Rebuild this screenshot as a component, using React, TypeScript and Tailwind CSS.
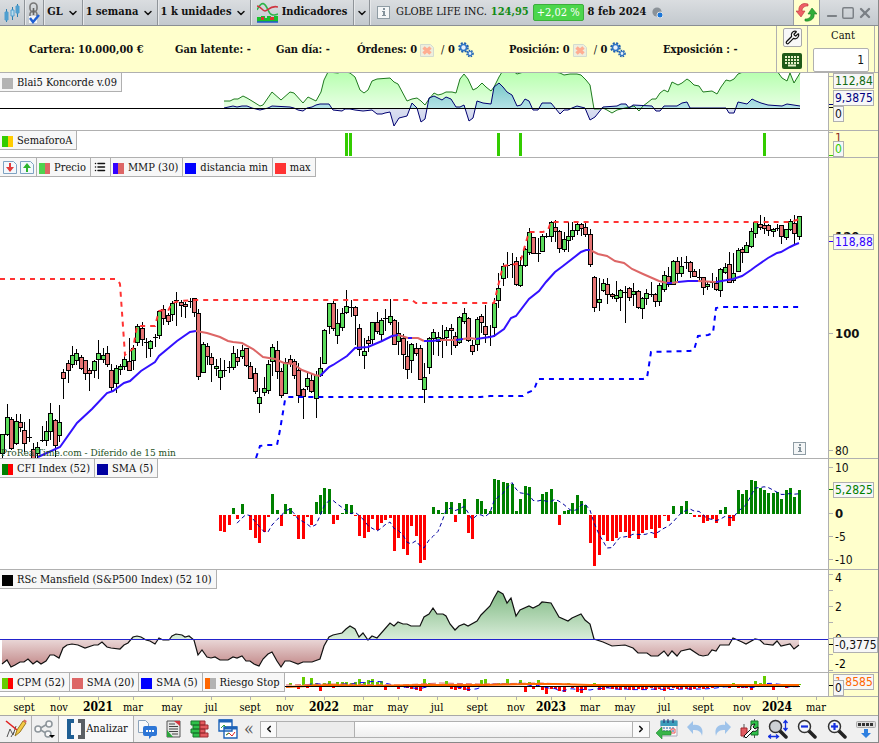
import type { ReactNode } from "react";
import { ChevronDown, ChevronLeft, ChevronRight, List, Minus, Square, Wrench, X } from "lucide-react";

const SERIF = "font-['DejaVu_Serif_Condensed','DejaVu_Serif',serif]";
const SANS = "font-['DejaVu_Sans_Condensed','DejaVu_Sans',sans-serif]";

// high, body top, body bottom, low, kind (1 up, 0 down, 2 doji)
const candles = [
  [434, 434, 453, 458, 1], [404, 417, 434, 436, 1], [417, 419, 448, 450, 0], [414, 421, 443, 445, 1],
  [414, 422, 427, 432, 0], [422, 430, 443, 452, 0], [419, 437, 437, 442, 2], [443, 449, 458, 458, 0],
  [442, 447, 453, 458, 1], [426, 440, 440, 442, 2], [421, 431, 440, 446, 1], [403, 413, 431, 440, 1],
  [419, 420, 445, 457, 0], [405, 422, 435, 442, 1], [369, 372, 378, 399, 0], [360, 363, 370, 383, 0],
  [346, 355, 364, 368, 1], [349, 353, 360, 365, 1], [355, 357, 368, 370, 0], [360, 360, 373, 380, 0],
  [368, 370, 373, 391, 0], [360, 361, 370, 378, 1], [340, 353, 359, 379, 1], [348, 355, 359, 363, 1],
  [346, 353, 364, 367, 0], [364, 370, 387, 391, 0], [365, 368, 383, 393, 1], [364, 366, 369, 375, 1],
  [355, 359, 366, 370, 1], [338, 361, 370, 371, 0], [345, 348, 360, 370, 1], [324, 326, 342, 346, 1],
  [322, 328, 339, 346, 0], [338, 342, 342, 358, 2], [340, 341, 348, 357, 1], [334, 337, 337, 347, 2],
  [310, 311, 335, 339, 1], [305, 309, 318, 325, 0], [313, 315, 321, 325, 0], [301, 303, 314, 321, 1],
  [292, 300, 300, 326, 2], [300, 302, 305, 317, 0], [302, 304, 306, 318, 0], [298, 301, 301, 308, 2],
  [298, 298, 312, 317, 0], [309, 313, 376, 380, 0], [342, 344, 372, 373, 1], [343, 346, 356, 365, 0],
  [353, 357, 364, 382, 0], [359, 366, 368, 376, 1], [358, 370, 377, 390, 1], [360, 370, 370, 377, 2],
  [361, 367, 367, 373, 2], [346, 353, 367, 370, 1], [349, 357, 361, 366, 0], [345, 350, 356, 359, 1],
  [348, 348, 365, 367, 0], [362, 366, 378, 379, 0], [368, 373, 391, 394, 0], [388, 397, 403, 413, 1],
  [377, 388, 392, 396, 1], [360, 364, 390, 394, 1], [344, 347, 361, 376, 1], [341, 350, 371, 379, 0],
  [368, 371, 395, 398, 0], [358, 362, 393, 394, 1], [355, 359, 363, 367, 0], [359, 361, 375, 379, 0],
  [363, 370, 395, 403, 0], [388, 389, 396, 419, 0], [372, 378, 386, 390, 1], [373, 380, 391, 393, 0],
  [371, 375, 398, 418, 1], [357, 368, 375, 377, 1], [329, 330, 363, 363, 1], [303, 303, 326, 334, 1],
  [301, 303, 328, 331, 0], [309, 323, 335, 344, 1], [308, 313, 327, 331, 1], [290, 306, 312, 314, 1],
  [300, 307, 307, 317, 2], [306, 307, 315, 345, 0], [324, 328, 349, 356, 0], [338, 351, 355, 369, 1],
  [336, 340, 343, 352, 0], [322, 322, 339, 344, 1], [312, 322, 331, 334, 0], [318, 320, 334, 342, 1],
  [309, 318, 318, 331, 2], [299, 316, 322, 325, 1], [319, 320, 344, 345, 0], [322, 333, 341, 355, 1],
  [334, 338, 354, 369, 0], [341, 356, 369, 379, 0], [343, 344, 360, 373, 1], [343, 348, 353, 356, 0],
  [345, 348, 379, 380, 0], [363, 377, 389, 403, 1], [337, 338, 367, 374, 1], [329, 332, 338, 355, 1],
  [332, 337, 341, 356, 1], [325, 338, 338, 358, 2], [327, 330, 337, 346, 1], [324, 328, 330, 355, 0],
  [332, 336, 345, 348, 0], [316, 317, 342, 344, 1], [308, 313, 321, 324, 1], [317, 318, 340, 342, 0],
  [340, 345, 351, 355, 0], [317, 319, 344, 351, 1], [314, 316, 322, 333, 0], [305, 326, 334, 343, 0],
  [325, 336, 336, 346, 2], [298, 303, 327, 337, 1], [273, 288, 300, 308, 1], [263, 266, 278, 286, 1],
  [252, 265, 265, 278, 2], [253, 264, 264, 278, 2], [257, 261, 284, 286, 0], [257, 265, 285, 287, 1],
  [248, 249, 265, 267, 1], [228, 232, 252, 255, 1], [237, 237, 253, 254, 0], [238, 253, 253, 262, 2],
  [234, 236, 251, 252, 1], [233, 236, 236, 238, 2], [221, 222, 236, 242, 1], [220, 227, 231, 242, 0],
  [230, 231, 248, 253, 0], [232, 239, 249, 252, 1], [222, 236, 240, 252, 1], [222, 230, 236, 240, 1],
  [223, 224, 230, 235, 1], [223, 224, 228, 236, 0], [223, 227, 234, 237, 0], [229, 234, 264, 267, 0],
  [276, 277, 307, 312, 0], [278, 299, 302, 311, 1], [279, 283, 290, 292, 1], [278, 284, 294, 304, 0],
  [293, 294, 296, 299, 0], [281, 295, 298, 302, 1], [289, 290, 297, 311, 1], [286, 292, 292, 323, 2],
  [287, 288, 297, 301, 0], [283, 291, 294, 306, 1], [290, 291, 307, 309, 0], [297, 298, 308, 319, 1],
  [289, 293, 298, 305, 1], [282, 294, 294, 297, 2], [293, 294, 301, 307, 0], [283, 285, 301, 306, 1],
  [271, 275, 289, 292, 1], [267, 276, 284, 287, 0], [260, 261, 284, 285, 1], [257, 261, 273, 281, 0],
  [257, 266, 273, 277, 1], [256, 262, 262, 269, 2], [261, 262, 271, 278, 0], [269, 271, 276, 277, 0],
  [269, 277, 277, 282, 2], [277, 277, 287, 295, 0], [281, 284, 286, 290, 1], [273, 282, 282, 288, 2],
  [277, 283, 289, 291, 0], [268, 269, 290, 297, 1], [263, 267, 272, 274, 1], [252, 264, 282, 283, 0],
  [253, 273, 280, 283, 1], [248, 250, 271, 272, 1], [247, 249, 252, 263, 0], [242, 245, 252, 253, 1],
  [228, 231, 246, 248, 1], [221, 222, 233, 238, 1], [215, 224, 227, 230, 0], [217, 225, 228, 234, 0],
  [224, 225, 230, 236, 0], [228, 229, 231, 237, 1], [224, 228, 228, 231, 2], [225, 225, 236, 244, 0],
  [229, 229, 237, 240, 1], [219, 221, 229, 231, 1], [215, 223, 233, 244, 0], [216, 216, 236, 240, 1],
];

const barX = (i: number) => Math.floor(2.95 + 4.351 * i);

const CFI_START = 50;
const cfi = [
  -16, -17, -10, 6, -4, 10, 0, -15, -23, -28, -17, -2, 20, 4, -11, 10, 6, -1, -24, -24, -2, -10, 12, 19, 26, 25,
  -9, -5, 1, 10, 9, -1, -21, -23, -17, -4, -15, -8, -5, -3, -36, -23, -34, -40, -11, -21, -48, -45, 0, 7, 4, 1,
  12, 12, -7, 11, 15, -18, -24, 15, 13, 5, 3, 35, 34, 32, 31, 30, 3, 15, 28, 27, 0, 0, 20, 22, 25, 12, -10, 3,
  4, 11, 19, 13, 9, -28, -51, -40, -20, -26, -26, -23, -17, -17, -23, -16, -24, -18, -15, -14, -23, -13, -1, -6,
  8, 0, 8, 13, 1, -2, -2, -8, -6, -4, -8, 4, 7, -11, -6, 24, 20, 24, 34, 33, 26, 24, 21, 21, 22, 15, 24, 26, 17, 24,
];
const cfiSma = cfi
  .map((_, i) => (i < 4 ? "" : `${barX(i + CFI_START)},${515 - cfi.slice(i - 4, i + 1).reduce((a, b) => a + b) / 5}`))
  .join(" ");

const CPM_START = 66;
const cpm = [
  2, 0, -3, 8, -2, 7, 2, -5, 2, 4, -2, 3, 3, 3, 2, 3, 6, 3, 5, 6, 3, 4, -4, 0, 0, -3, 0, -2, -3, -4, -5, 6, 2, 0,
  1, -1, 4, -3, -4, -3, -4, -5, -1, -1, 5, 6, 0, -1, 2, 2, 6, 2, 0, 5, -6, 3, -3, 5, -4, -8, -3, -3, -5, -6, 2,
  -2, -6, -7, -4, -1, 2, -4, -4, -2, -3, -3, -4, -3, -4, -4, -3, -4, -3, -2, -4, -3, -5, -3, -2, -3, -3, -3, -4,
  -3, -2, -3, -2, -2, -1, 1, 0, -2, 2, -2, -2, -2, -4, 4, 2, 9, 2, -4, 1, 0, -2, -1, -1, 1,
];
const cpmSma = cpm
  .map((_, i) => (i < 4 ? "" : `${barX(i + CPM_START)},${686 - cpm.slice(i - 4, i + 1).reduce((a, b) => a + b) / 5}`))
  .join(" ");

const koncordeGreen =
  "224,101 230,101 234,99 238,99 243,96 247,98 252,101 260,106 263,105 272,92 281,100 290,92 294,93 303,103 308,97 316,101 321,92 324,80 328,72 338,73 343,71 350,73 355,77 360,90 364,93 368,90 372,81 377,79 390,78 394,82 398,84 407,101 412,99 417,98 421,101 425,105 429,99 434,93 438,95 442,94 446,92 452,92 456,93 460,79 464,74 468,79 473,90 477,88 482,83 486,87 491,91 494,87 499,77 502,72 513,71 517,74 527,71 543,70 560,73 564,75 570,74 577,74 581,75 586,80 590,85 594,109 599,109 603,108 607,110 612,113 617,110 625,108 634,106 639,111 643,106 647,103 652,99 656,99 660,93 664,90 668,92 672,82 678,85 682,83 687,79 690,81 694,85 699,86 703,92 712,91 717,94 721,87 726,80 730,81 734,79 738,74 743,72 777,71 782,78 787,81 790,73 794,83 800,73";
const koncordeBlue =
  "224,108 233,106 237,107 242,106 247,106 252,108 260,110 268,108 272,106 290,107 294,108 298,110 303,111 307,108 312,107 316,105 320,104 329,104 333,110 342,111 345,109 350,109 355,110 363,111 372,110 377,114 382,114 385,113 390,112 394,126 399,118 407,116 412,103 417,108 421,122 425,119 429,98 434,96 442,100 446,97 451,99 456,107 460,107 464,105 469,121 473,118 477,101 483,103 491,104 494,87 499,83 503,87 507,92 512,95 517,106 521,105 525,99 529,101 533,110 538,110 542,103 551,103 560,114 564,110 568,110 572,108 577,106 585,108 590,120 595,117 599,112 603,107 617,106 621,104 626,104 629,108 633,105 652,106 656,111 660,111 664,106 677,106 682,103 687,102 690,108 703,108 726,108 729,113 734,113 738,102 747,104 752,99 756,101 761,103 768,105 782,106 787,104 800,106";

const mansfield =
  "2,664 7,660 11,667 15,665 20,662 24,662 28,659 33,664 37,661 41,664 46,661 50,655 54,655 59,658 63,648 67,645 72,644 78,645 85,648 94,645 98,645 102,642 107,647 111,648 120,649 124,645 128,643 133,637 137,636 141,637 146,640 150,641 155,644 159,638 163,640 169,640 172,636 176,634 182,635 185,637 189,636 194,640 198,655 202,650 207,657 211,658 215,657 220,660 228,660 233,657 237,658 242,656 246,661 250,661 254,664 259,666 263,659 268,654 272,652 277,661 281,667 285,661 290,661 298,664 303,662 312,662 320,659 324,646 329,637 333,635 342,633 346,629 350,626 355,629 359,637 363,633 368,640 372,636 377,638 390,623 394,626 398,622 403,624 407,624 411,626 420,626 424,617 429,614 433,608 437,614 443,614 446,616 450,624 455,630 459,626 464,624 468,626 477,621 481,615 490,606 494,598 498,591 503,594 507,603 511,598 516,616 520,610 529,606 533,608 539,605 542,602 551,603 555,610 559,617 568,621 572,618 581,614 585,620 590,624 594,639 603,642 612,646 625,645 633,648 638,653 647,653 651,656 658,656 664,651 668,656 672,651 677,656 681,651 690,649 699,655 703,656 708,655 712,650 716,651 720,645 729,645 733,638 742,642 746,644 755,639 760,640 764,644 773,645 777,641 781,646 790,644 794,649 799,645";

const mmpUp = [
  "38,457 60,447 77,423 92,409 107,393 113,391 124,383 130,381 141,371 155,362 159,356 177,341 190,332 196,331",
  "320,376 329,367 333,365 347,356 355,348 368,347 382,341 392,336 398,335",
  "408,338 412,338",
  "424,341 432,341 440,340",
  "448,340 452,340",
  "456,340 463,339",
  "476,339 490,337 494,336 504,329 511,318 516,316 529,299 539,291 546,282 555,272 563,266 581,252 586,250 590,250",
  "667,283 672,283",
  "678,282 688,281 698,281",
  "716,282 733,279 742,276 751,270 755,267 768,258 777,253 781,252 790,247 794,245 799,243",
];
const mmpDown = [
  "196,331 207,333 220,337 228,341 233,342 242,343 253,349 263,357 275,359 284,363 293,364 302,370 315,375 320,376",
  "398,335 408,338",
  "412,338 418,338 424,341",
  "440,340 456,340",
  "463,339 470,338 476,339",
  "590,250 598,254 607,256 615,261 624,263 632,269 643,274 659,281 667,283",
  "672,283 678,282",
  "698,281 716,282",
];

const months: [number, string][] = [
  [24, "sept"], [59, "nov"], [98, "2021"], [133, "mar"], [172, "may"], [211, "jul"], [250, "sept"], [285, "nov"],
  [324, "2022"], [363, "mar"], [398, "may"], [437, "jul"], [477, "sept"], [516, "nov"], [551, "2023"],
  [590, "mar"], [625, "may"], [664, "jul"], [703, "sept"], [742, "nov"], [777, "2024"], [816, "mar"],
];

function Panel({ top, height, box, legend, axis, children }: {
  top: number;
  height: string;
  box: number;
  legend?: ReactNode;
  axis: ReactNode;
  children: ReactNode;
}) {
  return (
    <section className={`flex ${height} border-b border-[#b0b0b0]`}>
      <div className="relative min-w-0 flex-1 bg-white">
        <svg className="block h-full w-full" viewBox={`0 ${top} 828 ${box}`} preserveAspectRatio="none">
          {children}
        </svg>
        {legend && <div className="absolute top-0 left-0 flex h-[19px] border-r border-b border-[#b0b0b0] bg-[#f7f7f7]">{legend}</div>}
      </div>
      <svg className={`block h-full w-[50px] shrink-0 border-l border-[#b0b0b0] bg-[#ffffcc] text-xs ${SANS}`} viewBox={`829 ${top} 49 ${box}`}>
        {axis}
      </svg>
    </section>
  );
}

function Legend({ colors, label }: { colors: string[]; label: string }) {
  return (
    <span className="flex items-center gap-1 border-l border-[#b0b0b0] pt-0.5 pr-1 pl-0.5 first:border-l-0">
      <span className="flex size-[11px] shrink-0">
        {colors.map((c) => (
          <i key={c} className={`flex-1 ${c}`} />
        ))}
      </span>
      <span className="text-[11px] leading-4 whitespace-nowrap">{label}</span>
    </span>
  );
}

function Tick({ y, label, bold, color = "#111" }: { y: number; label?: string; bold?: boolean; color?: string }) {
  return (
    <>
      <rect x="829" y={y} width="4" height="1" fill="#b0b0b0" />
      {label && (
        <text x="835" y={y + 5} fill={color} className={bold ? "text-[13px] font-bold" : ""}>{label}</text>
      )}
    </>
  );
}

function Tag({ y, w, label, color }: { y: number; w: number; label: string; color: string }) {
  return (
    <>
      <rect x="833.5" y={y + 0.5} width={w} height="15" fill="#f7f7f7" stroke="#b0b0b0" />
      <text x="835" y={y + 12} fill={color}>{label}</text>
    </>
  );
}

function Bars({ data, start, base, up, down }: { data: number[]; start: number; base: number; up: string; down: string }) {
  return (
    <g shapeRendering="crispEdges">
      {data.map((v, i) =>
        v === 0 ? null : (
          <rect key={i} x={barX(i + start) - 1} y={v > 0 ? base - 1 - v : base} width="3" height={Math.abs(v)} fill={v > 0 ? up : down} />
        ),
      )}
    </g>
  );
}

function Gears() {
  return (
    <svg className="h-4 w-4" viewBox="0 0 16 16" fill="none">
      <circle cx="5.5" cy="5.5" r="4.3" stroke="#1e5fae" strokeWidth="2" strokeDasharray="2 1.4" />
      <circle cx="5.5" cy="5.5" r="3" fill="#e8f1fa" stroke="#2f74c4" strokeWidth="1.6" />
      <circle cx="12" cy="11.5" r="3" stroke="#1e5fae" strokeWidth="1.6" strokeDasharray="1.5 1" />
      <circle cx="12" cy="11.5" r="2" fill="#e8f1fa" stroke="#2f74c4" strokeWidth="1.2" />
    </svg>
  );
}

function CancelOrder({ label }: { label: string }) {
  return (
    <button aria-label={label} className="flex">
      <svg className="h-[13px] w-[14px]" viewBox="0 0 14 13">
        <path d="M.5.5h10l3 3v9H.5z" fill="#eeeedd" stroke="#d3dcd0" />
        <path d="M3.5 3.5l7 6M10.5 3.5l-7 6" stroke="#ffae91" strokeWidth="3.5" />
      </svg>
    </button>
  );
}

function TitleBar() {
  const drop = "flex items-center gap-1 border-r border-[#8f9499] shadow-[1px_0_0_#e6e8ea]";
  return (
    <header className="flex h-[26px] border-b border-[#8a8f94] bg-linear-to-b from-[#dadde0] to-[#c3c9ce] text-[11px]">
      <button aria-label="Tipo de gráfico" className={`${drop} w-[25px] shrink-0 justify-center`}>
        <svg className="h-[18px] w-4" viewBox="0 0 16 18">
          <path d="M2.5 5v13M8.5 3v13M13.5 0v13" stroke="#2d7fae" />
          <path d="M1 8h3v8H1zM12 2h3v7h-3z" fill="#4e9fd0" stroke="#4e9fd0" />
          <path d="M7 6h3v6H7z" fill="#b9dcee" stroke="#4e9fd0" />
        </svg>
      </button>
      <button aria-label="Enlazar" className={`${drop} w-[19px] shrink-0 justify-center`}>
        <svg className="h-[22px] w-[14px]" viewBox="0 0 14 22" fill="none">
          <rect x="3" y="1" width="7" height="9" rx="3.4" stroke="#777" strokeWidth="1.6" />
          <rect x="3" y="9" width="7" height="9" rx="3.4" stroke="#777" strokeWidth="1.6" />
          <path d="M6.500 6v7" stroke="#666" strokeWidth="1.600" />
          <path d="M2 14h8v7H2z" fill="#f4f6f8" />
          <path d="M3 16l3 4 6-7" stroke="#1f5fd2" strokeWidth="2.4" />
        </svg>
      </button>
      <button className={`${drop} w-[39px] shrink-0 justify-center font-bold`}>GL <ChevronDown className="size-3" strokeWidth={3} /></button>
      <button className={`${drop} w-[75px] shrink-0 justify-center font-bold whitespace-nowrap`}>1 semana <ChevronDown className="size-3" strokeWidth={3} /></button>
      <button className={`${drop} w-[93px] shrink-0 justify-center font-bold whitespace-nowrap`}>1 k unidades <ChevronDown className="size-3" strokeWidth={3} /></button>
      <button className={`${drop} w-[103px] shrink-0 justify-center font-bold`}>
        <svg className="h-[21px] w-[21px] shrink-0" viewBox="0 0 21 21" fill="none">
          <path d="M0 8C5-2 8 1 11 8s6 5 10 4" stroke="#2eb34a" strokeWidth="1.6" />
          <path d="M0 4c4 0 5 5 8 5s5-6 13-4" stroke="#cf3440" strokeWidth="1.6" />
          <path d="M0 15h4v-1h4v2h2v-2h4v1h3v-1h4v6H0z" fill="#17c02b" />
          <path d="M4 15h3v3H4zM13 15h4v3h-4z" fill="#d33" />
          <path d="M0 20h21" stroke="#2256d2" strokeWidth="1.5" />
        </svg>
        Indicadores
      </button>
      <button aria-label="Lista de indicadores" className={`${drop} w-4 shrink-0 justify-center`}><ChevronDown className="size-3" strokeWidth={3} /></button>
      <div className="flex min-w-0 flex-1 items-center gap-1 pl-[7px] whitespace-nowrap">
        <InfoIcon />
        <span className="pl-0.5">GLOBE LIFE INC.</span>
        <b className="text-[#138a13]">124,95</b>
        <span className="rounded-xs border border-[#3cae3c] bg-[#4cd64c] px-[3px] leading-[15px] text-white">+2,02 %</span>
        <b>8 feb 2024</b>
        <svg className="ml-0.5 h-[11px] w-[11px]" viewBox="0 0 11 11">
          <circle cx="5" cy="5" r="4.6" fill="#8b9298" />
          <circle cx="8" cy="8" r="3" fill="#1b76d8" stroke="#dfe3e6" />
        </svg>
      </div>
      <button aria-label="Actualizar" className="flex w-[27px] shrink-0 items-center justify-center border-x border-[#9a9fa3] bg-[#ffffcc]">
        <svg className="h-[19px] w-[21px]" viewBox="0 0 21 19">
          <path d="M12 1C6-1 2 3 3 8H0l5 6 4-6H6c0-3 2-5 6-5z" fill="#ee6065" stroke="#b93238" strokeWidth=".6" />
          <path d="M9 18c6 1 10-3 9-7h3l-5-6-4 6h3c0 3-2 5-6 5z" fill="#2fae38" stroke="#1b7a24" strokeWidth=".6" />
        </svg>
      </button>
      <div className="flex w-[58px] shrink-0 items-center justify-around px-1 text-[#7b8085]">
        <button aria-label="Minimizar"><Minus className="mt-1.5 size-3.5" strokeWidth={3.5} /></button>
        <button aria-label="Maximizar"><Square className="size-3.5" strokeWidth={2.5} /></button>
        <button aria-label="Cerrar"><X className="size-4" strokeWidth={3.5} /></button>
      </div>
    </header>
  );
}

function InfoIcon() {
  return (
    <svg className="shrink-0" width="13" height="13" viewBox="0 0 13 13">
      <rect x=".5" y=".5" width="12" height="12" fill="#f4f6f7" stroke="#8f9ca4" />
      <path d="M6 2h2v2H6zM5 5h3v4h1v1H5V9h1V6H5z" fill="#84929b" />
    </svg>
  );
}

function Account() {
  return (
    <div className="flex h-[47px] border-b border-[#b0b0b0] text-[11px]">
      <div className="flex min-w-0 flex-1 items-center pt-0.5 pl-[29px] font-bold whitespace-nowrap">
        <span className="w-[146px]">Cartera: 10.000,00 €</span>
        <span className="w-[101px]">Gan latente: -</span>
        <span className="w-[81px]">Gan día: -</span>
        <span className="flex w-[152px] items-center gap-[3px]">
          Órdenes: 0 <CancelOrder label="Cancelar órdenes" /> <span className="ml-1"><span className="font-normal">/</span> 0</span> <Gears />
        </span>
        <span className="flex w-[154px] items-center gap-[3px]">
          Posición: 0 <CancelOrder label="Cerrar posición" /> <span className="ml-1"><span className="font-normal">/</span> 0</span> <Gears />
        </span>
        <span>Exposición : -</span>
      </div>
      <div className="flex w-8 shrink-0 flex-col items-center gap-1.5 border-x border-[#b0b0b0] pt-0.5">
        <button aria-label="Ajustes" className="flex size-[19px] items-center justify-center rounded-xs border border-[#a8a8a8] bg-[#f8f8f8]">
          <Wrench className="size-[15px]" strokeWidth={2} />
        </button>
        <button aria-label="Teclado">
          <svg className="block h-4 w-5" viewBox="0 0 20 16">
            <rect width="20" height="16" rx="2" fill="#1f5a18" />
            <path d="M3 4h14M3 7h14M3 10h14" stroke="#e6f0c8" strokeWidth="2" strokeDasharray="2 1" />
            <path d="M6 12.500h8" stroke="#e6f0c8" strokeWidth="2" />
          </svg>
        </button>
      </div>
      <label className="flex w-[67px] shrink-0 flex-col items-center gap-1 border-r border-[#b0b0b0] pt-0.5">
        <span className="pl-1 leading-4">Cant</span>
        <input defaultValue="1" className={`h-6 w-14 rounded-xs border border-[#b0b0b0] bg-white px-1 text-right text-xs ${SANS}`} />
      </label>
      <div className="w-[3px] shrink-0" />
    </div>
  );
}

function BottomBar() {
  const btn = "flex shrink-0 items-center justify-center";
  return (
    <footer className="flex h-7 items-center border-y border-t-[#a8a8a8] border-b-[#888] bg-[#f0f0f0] text-[11px]">
      <button aria-label="Dibujar" className={`${btn} h-full w-8 border-r border-[#b0b0b0]`}>
        <svg className="h-5 w-[22px]" viewBox="0 0 22 20" fill="none">
          <path d="M2 18l3-8 3 6 3-9M6 18l3-5" stroke="#555" />
          <path d="M1 2l11 9" stroke="#e02020" strokeWidth="1.600" />
          <path d="M10 17l2-6 6-9 3 2-6 9z" fill="#f4c945" stroke="#9c7a22" />
          <path d="M18 2l3 2 .8-2-2.300-1.600z" fill="#e06a60" />
        </svg>
      </button>
      <button aria-label="Compartir" className={`${btn} h-full w-[26px]`}>
        <svg className="h-[19px] w-[22px]" viewBox="0 0 22 19" fill="#f8f8f8" stroke="#8d959b" strokeWidth="1.500">
          <path d="M5 9l10-6M5 9l10 6" />
          <circle cx="4" cy="9" r="3" /><circle cx="15" cy="4" r="3" /><circle cx="14" cy="14" r="3" />
          <path d="M15 15h6l-3 3z" fill="#000" stroke="none" />
        </svg>
      </button>
      <button className={`${btn} h-full w-[76px] justify-between border-x border-[#b0b0b0] bg-[#f9f9f9] px-1 pr-0.5`}>
        <svg className="h-5 w-5" viewBox="0 0 20 20" fill="none" strokeWidth="4">
          <path d="M8 2H3v16h5" stroke="#205f94" />
          <path d="M12 2h5v16h-5" stroke="#5b5f63" />
        </svg>
        Analizar
      </button>
      <div className="flex w-[104px] shrink-0 items-center justify-between pl-1">
        <button aria-label="Notas">
          <svg className="block h-[19px] w-[19px]" viewBox="0 0 19 19">
            <path d="M.5.5h7l3 3v9H.5z" fill="#fafafa" stroke="#8ba3bb" />
            <path d="M7 6h10q2 0 2 2v6q0 2-2 2h-3l-3 3v-3H7q-2 0-2-2V8q0-2 2-2z" fill="#2e76d6" />
            <path d="M8 11h8" stroke="#fff" strokeWidth="2" strokeDasharray="2 1" />
          </svg>
        </button>
        <button aria-label="Informe">
          <svg className="block h-[18px] w-[15px]" viewBox="0 0 15 18">
            <path d="M1 1h13v16H1z" fill="#e6e6e6" stroke="#555" />
            <path d="M3 4h6M3 6.500h9M3 9h9M3 11.500h9M6 14h6" stroke="#444" />
            <path d="M8 1h6v5z" fill="#d3343e" /><path d="M1 10l6 7H1z" fill="#2ca43c" />
          </svg>
        </button>
        <button aria-label="Libro de órdenes">
          <svg className="block h-[18px] w-[19px]" viewBox="0 0 19 18">
            <path d="M1 1h9v4H1zM3 5h7v4H3zM1 9h9v4H1zM3 13h7v4H3z" fill="#2fc04a" stroke="#16772a" />
            <path d="M10 1h5v4h-5zM10 5h8v4h-8zM10 9h5v4h-5zM10 13h8v4h-8z" fill="#e35a5f" stroke="#9c2a30" />
          </svg>
        </button>
        <button aria-label="Ventanas">
          <svg className="block h-5 w-5" viewBox="0 0 20 20" fill="none">
            <path d="M1 1h13v11H1zM6 8h13v11H6z" fill="#fff" stroke="#1c63b8" strokeWidth="1.400" />
            <path d="M1 2h13M6 9h13" stroke="#1c63b8" strokeWidth="3" />
            <path d="M3 9l3-3 2 2" stroke="#2ca43c" />
            <path d="M8 16l3-2 3 3 3-4" stroke="#d22" /><path d="M8 16l3-2" stroke="#2ca43c" />
          </svg>
        </button>
      </div>
      <button aria-label="Contraer" className={`${btn} w-[22px] text-lg leading-4 text-[#555]`}>«</button>
      <div className="flex h-[17px] min-w-0 flex-1 border border-[#b0b0b0] bg-[#eee]">
        <button aria-label="Anterior" className={`${btn} w-4 border-r border-[#b0b0b0] bg-[#fafafa]`}><ChevronLeft className="size-2.5" strokeWidth={4} /></button>
        <div className="flex-[78] bg-[#ececec]" />
        <div className="flex-[279] border-x border-[#b0b0b0] bg-linear-to-b from-white to-[#efefef]" />
        <button aria-label="Siguiente" className={`${btn} w-4 bg-[#fafafa]`}><ChevronRight className="size-2.5" strokeWidth={4} /></button>
      </div>
      <div className="flex w-[228px] shrink-0 items-center justify-between pr-[2px] pl-[6px]">
        <button aria-label="Ir a fecha">
          <svg className="block h-5 w-[22px]" viewBox="0 0 22 20">
            <path d="M5 2h16v15H5z" fill="#f7f7f7" stroke="#aab" /><path d="M4.500 1.500h17V7h-17z" fill="#3b9dbb" />
            <path d="M8 0v4M12 0v4M17 0v4" stroke="#226" />
            <path d="M7 9h12M7 12h12" stroke="#8ac" strokeWidth="2" strokeDasharray="2 1" />
            <path d="M15 10h4v4h-4z" fill="none" stroke="#e55" />
            <path d="M0 14l6-6v4h9v4H6v4z" fill="#39b54a" stroke="#20862f" strokeWidth=".6" />
          </svg>
        </button>
        <button aria-label="Deshacer">
          <svg className="block h-4 w-[17px]" viewBox="0 0 17 16"><path d="M0 6l6-6v4c7-1 11 3 9 11-1-5-4-6-9-6v4z" fill="#9fc3ea" /></svg>
        </button>
        <button aria-label="Rehacer">
          <svg className="block h-4 w-[17px]" viewBox="0 0 17 16"><path d="M17 6l-6-6v4C4 3 0 7 2 15c1-5 4-6 9-6v4z" fill="#9fc3ea" /></svg>
        </button>
        <button aria-label="Configurar gráfico">
          <svg className="block h-5 w-[19px]" viewBox="0 0 19 20">
            <path d="M4 5v14M14.500 0v19" stroke="#555" />
            <path d="M1 9h6v8H1z" fill="#e25a60" stroke="#a3292f" /><path d="M11 2h7v14h-7z" fill="#30c24b" stroke="#16772a" />
            <path d="M4 17l7-7c-1-3 1-5 4-5l-2 3 2 2 3-2c0 4-3 5-5 4l-7 7z" fill="#fff" stroke="#111" />
          </svg>
        </button>
        <Magnifier label="Ajustar zoom" kind="fit" />
        <Magnifier label="Reducir" kind="out" />
        <Magnifier label="Ampliar" kind="in" />
        <button aria-label="Ocultar barra">
          <svg className="block h-[18px] w-5" viewBox="0 0 20 18">
            <rect x=".5" y="1.500" width="19" height="6" rx="1" fill="#ddd" stroke="#aaa" />
            <path d="M2 4.500h16" stroke="#333" strokeWidth="3" strokeDasharray="3 1" />
            <path d="M8 9h4v4h3l-5 5-5-5h3z" fill="#2f80e0" />
          </svg>
        </button>
      </div>
    </footer>
  );
}

function Magnifier({ label, kind }: { label: string; kind: "fit" | "out" | "in" }) {
  return (
    <button aria-label={label}>
      <svg className="block h-5 w-5" viewBox="0 0 20 20" fill="none">
        <path d="M12 12l6 6" stroke="#222" strokeWidth="3.500" strokeLinecap="round" />
        <circle cx="7.500" cy="7.500" r="6" fill={kind === "fit" ? "#ccd0d4" : "#f4f6fa"} stroke="#333" strokeWidth="1.500" />
        {kind !== "fit" && <path d="M4 7.500h7" stroke="#1430e0" strokeWidth="2.200" />}
        {kind === "in" && <path d="M7.500 4v7" stroke="#1430e0" strokeWidth="2.200" />}
        {kind === "fit" && (
          <path d="M17.500 2v9M15.500 4l2-2.500 2 2.500M15.500 9l2 2.500 2-2.500M1 17.500h9M3 15.500l-2.500 2 2.500 2M8 15.500l2.500 2-2.500 2" stroke="#1430e0" strokeWidth="1.300" />
        )}
      </svg>
    </button>
  );
}

export default function App() {
  return (
    <div className={`flex min-w-0 flex-col overflow-hidden border-r border-[#888] bg-[#ffffcc] text-[#111] ${SERIF}`}>
      <TitleBar />
      <Account />
      <main>
        <Panel
          top={73}
          box={57}
          height="h-[58px]"
          legend={<Legend colors={["bg-[#b3b3b3]"]} label="Blai5 Koncorde v.09" />}
          axis={
            <>
              <Tick y={76} />
              <rect x="829" y="104" width="5" height="1" fill="#000080" />
              <rect x="829" y="107" width="5" height="1" />
              <Tag y={73} w={40} label="112,84" color="#136b13" />
              <Tag y={90} w={40} label="9,3875" color="#000080" />
              <Tag y={106} w={10} label="0" color="#111" />
            </>
          }
        >
          <defs>
            <linearGradient id="kg" x1="0" y1="73" x2="0" y2="108" gradientUnits="userSpaceOnUse">
              <stop stopColor="#b8ffb0" />
              <stop offset="1" stopColor="#e8ffe4" />
            </linearGradient>
            <linearGradient id="kb" x1="0" y1="83" x2="0" y2="126" gradientUnits="userSpaceOnUse">
              <stop stopColor="#78c8c8" />
              <stop offset=".58" stopColor="#b4e2e6" />
              <stop offset=".58" stopColor="#dde1f2" />
              <stop offset="1" stopColor="#c8d0ea" />
            </linearGradient>
          </defs>
          <path d={`M224,108 L${koncordeGreen} L800,108z`} fill="url(#kg)" />
          <path d={`M224,108 L${koncordeBlue} L800,108z`} fill="url(#kb)" />
          <polyline points={koncordeGreen} fill="none" stroke="#1f7a1f" />
          <polyline points={koncordeBlue} fill="none" stroke="#000070" />
          <rect y="108" width="800" height="1" />
        </Panel>

        <Panel
          top={131}
          box={26}
          height="h-[27px]"
          legend={<Legend colors={["bg-[#33cc00]", "bg-[#ffcc00]"]} label="SemaforoA" />}
          axis={
            <>
              <Tick y={132} />
              <text x="835" y="142" fill="#8b2a1a">1</text>
              <rect x="829" y="155" width="4" height="1" fill="#33cc00" />
              <Tag y={141} w={10} label="0" color="#33cc00" />
            </>
          }
        >
          {[345, 349, 497, 519, 763].map((x) => (
            <rect key={x} x={x} y="133" width="3" height="23" fill="#33cc00" />
          ))}
        </Panel>

        <Panel
          top={158}
          box={300}
          height="h-[301px]"
          legend={
            <>
              <span className="flex w-9 items-center justify-center gap-[3px]">
                <button aria-label="Vender"><ArrowBox down /></button>
                <button aria-label="Comprar"><ArrowBox /></button>
              </span>
              <Legend colors={["bg-[#4fd24f]", "bg-[#dd6666]"]} label="Precio" />
              <button aria-label="Lista" className="flex w-5 items-center justify-center border-l border-[#b0b0b0]"><List className="size-3" strokeWidth={3} /></button>
              <Legend colors={["bg-[#3300ff]", "bg-[#dd6666]"]} label="MMP (30)" />
              <Legend colors={["bg-[#0000ff]"]} label="distancia min" />
              <Legend colors={["bg-[#ff3333]"]} label="max" />
            </>
          }
          axis={
            <>
              <Tick y={236} label="120" bold />
              <Tick y={333} label="100" bold />
              <Tick y={450} label="80" />
              <rect x="829" y="241" width="4" height="1" fill="#3300ff" />
              <Tag y={234} w={40} label="118,88" color="#3300ff" />
            </>
          }
        >
          <g shapeRendering="crispEdges">
            {candles.map(([h, t, b, l, kind], i) => {
              const x = barX(i);
              return (
                <g key={i}>
                  <rect x={x} y={h} width="1" height={Math.max(1, l - h)} fill="#000" />
                  {kind === 2 ? (
                    <rect x={x - 2} y={t} width="5" height="1" fill="#000" />
                  ) : (
                    <rect x={x - 1.5} y={t + 0.5} width="4" height={b - t} fill={kind === 1 ? "#5bdc5b" : "#e57373"} stroke="#000" />
                  )}
                </g>
              );
            })}
          </g>
          <g fill="none" strokeWidth="2">
            {mmpUp.map((p) => <polyline key={p} points={p} stroke="#3311ff" />)}
            {mmpDown.map((p) => <polyline key={p} points={p} stroke="#dd6666" />)}
            <polyline
              points="0,279 115,279 119,282 120,284 125,355 128,352 133,349 137,326 155,326 159,311 163,310 168,311 172,303 180,301 194,300 412,300 416,303 494,303 503,266 516,264 520,263 529,232 543,232 548,230 551,222 790,222 800,219"
              stroke="#ff3333"
              strokeDasharray="5 5"
            />
            <polyline
              points="256,458 260,446 266,445 277,445 280,430 285,400 288,397 480,397 490,396 523,396 527,393 534,390 538,379 643,379 647,378 651,352 690,351 694,350 698,336 708,335 713,333 716,308 722,307 799,307"
              stroke="#0000ff"
              strokeDasharray="5 5"
            />
          </g>
          <text x="1" y="456" className="text-[10px]" fill="#245024">ProRealTime.com - Diferido de 15 min</text>
          <g transform="translate(793 442)"><InfoIcon /></g>
        </Panel>

        <Panel
          top={459}
          box={110}
          height="h-[111px]"
          legend={
            <>
              <Legend colors={["bg-[#008000]", "bg-[#ff0000]"]} label="CFI Index (52)" />
              <Legend colors={["bg-[#0000a0]"]} label="SMA (5)" />
            </>
          }
          axis={
            <>
              <Tick y={467} label="10" />
              <Tick y={513} label="0" bold />
              <Tick y={536} label="-5" />
              <Tick y={559} label="-10" />
              <rect x="829" y="489" width="4" height="1" fill="#008000" />
              <Tag y={482} w={40} label="5,2825" color="#008000" />
            </>
          }
        >
          <Bars data={cfi} start={CFI_START} base={515} up="#008000" down="#ff0000" />
          <polyline points={cfiSma} fill="none" stroke="#0000a0" strokeDasharray="4 3" />
        </Panel>

        <Panel
          top={570}
          box={102}
          height="h-[103px]"
          legend={<Legend colors={["bg-black"]} label="RSc Mansfield (S&P500 Index) (52 10)" />}
          axis={
            <>
              <Tick y={574} />
              <text x="835" y="582">4</text>
              <Tick y={590} />
              <Tick y={606} label="2" />
              <Tick y={622} />
              <Tick y={638} label="0" />
              <Tick y={654} />
              <Tick y={670} />
              <text x="835" y="668">-2</text>
              <rect x="829" y="644" width="4" height="1" />
              <Tag y={637} w={44} label="-0,3775" color="#111" />
            </>
          }
        >
          <defs>
            <linearGradient id="rs" x1="0" y1="590" x2="0" y2="669" gradientUnits="userSpaceOnUse">
              <stop stopColor="#7db880" />
              <stop offset=".62" stopColor="#d8ecd9" />
              <stop offset=".62" stopColor="#ead8d8" />
              <stop offset="1" stopColor="#bf8282" />
            </linearGradient>
          </defs>
          <path d={`M2,639 L${mansfield} L799,639z`} fill="url(#rs)" />
          <polyline points={mansfield} fill="none" stroke="#111" strokeWidth="1.2" />
          <rect y="639" width="828" height="1" fill="#2222cc" />
        </Panel>

        <Panel
          top={673}
          box={23}
          height="h-[24px]"
          legend={
            <>
              <Legend colors={["bg-[#66cc00]", "bg-[#ff0000]"]} label="CPM (52)" />
              <Legend colors={["bg-[#dd6666]"]} label="SMA (20)" />
              <Legend colors={["bg-[#0000ff]"]} label="SMA (5)" />
              <Legend colors={["bg-[#ff6600]", "bg-[#b3b3b3]"]} label="Riesgo Stop" />
            </>
          }
          axis={
            <>
              <rect x="829" y="685" width="4" height="1" />
              <Tag y={674} w={40} label="1,8585" color="#ff6600" />
              <Tag y={680} w={10} label="0" color="#111" />
            </>
          }
        >
          <Bars data={cpm} start={CPM_START} base={686} up="#66cc00" down="#ff0000" />
          <polyline points={cpmSma} fill="none" stroke="#0000ff" strokeDasharray="5 4" />
          <polyline points="286,685 330,684 400,685 440,683 480,684 540,683 590,685 660,687 720,686 799,685" fill="none" stroke="#dd6666" strokeDasharray="6 3" />
          <polyline points="286,687 330,685 370,686 420,685 480,685 530,684 555,684 590,685 600,685 690,685 740,685 799,685" fill="none" stroke="#ff6600" strokeWidth="2" />
          <rect y="686" width="800" height="1" />
        </Panel>

        <div className="h-[18px] pr-[50px]">
          <svg className={`block h-full w-full overflow-visible text-[11px] ${SERIF}`}>
            {months.map(([x, label]) => (
              <g key={x}>
                <rect x={`${x / 8.28}%`} width="1" height="3" fill="#b0b0b0" />
                <text x={`${x / 8.28}%`} y="14" textAnchor="middle" className={label.startsWith("20") ? "text-xs font-bold" : ""}>{label}</text>
              </g>
            ))}
          </svg>
        </div>
      </main>
      <BottomBar />
    </div>
  );
}

function ArrowBox({ down }: { down?: boolean }) {
  return (
    <svg className="block h-[13px] w-[14px]" viewBox="0 0 14 13">
      <path d="M.5.5h10l3 3v9H.5z" fill="#f3f8fc" stroke="#7fa3c2" />
      {down ? <path d="M6 2h2v4h3l-4 5-4-5h3z" fill="#e23b3b" /> : <path d="M6 11h2V7h3L7 2 3 7h3z" fill="#2cb52c" />}
    </svg>
  );
}
